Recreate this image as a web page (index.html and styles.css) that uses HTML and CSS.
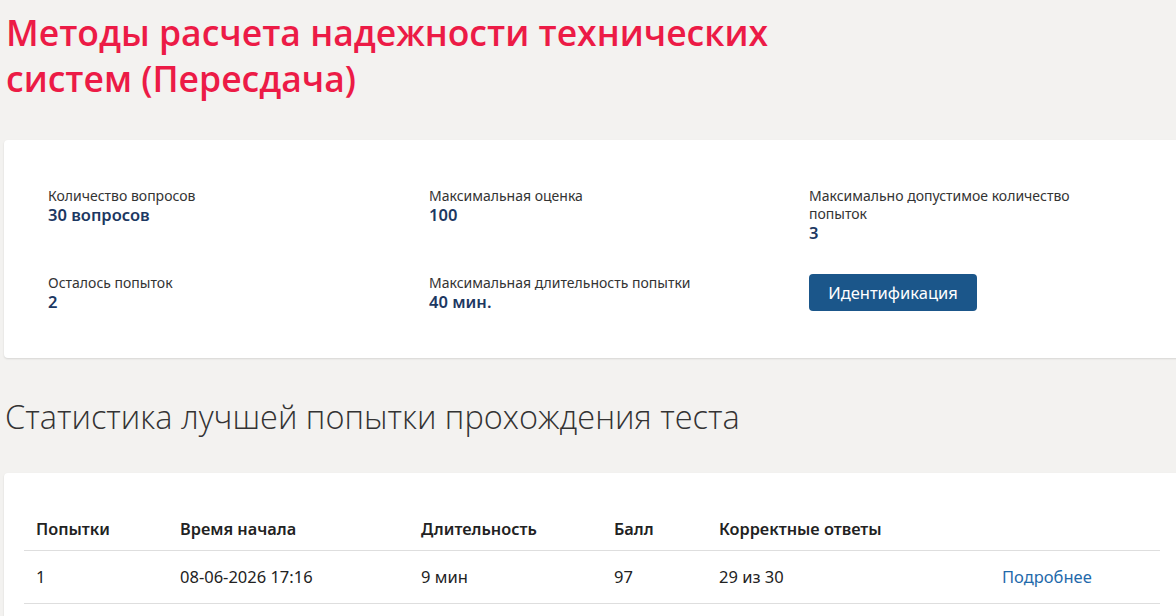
FILE: index.html
```html
<!DOCTYPE html>
<html lang="ru">
<head>
<meta charset="utf-8">
<title>Методы расчета надежности технических систем</title>
<link rel="stylesheet" href="styles.css">
</head>
<body>
<div class="page">
  <h1 class="title">Методы расчета надежности технических систем (Пересдача)</h1>

  <section class="card info-card">
    <div class="info-grid">
      <div class="info-item">
        <div class="info-label">Количество вопросов</div>
        <div class="info-value">30 вопросов</div>
      </div>
      <div class="info-item">
        <div class="info-label">Максимальная оценка</div>
        <div class="info-value">100</div>
      </div>
      <div class="info-item narrow">
        <div class="info-label">Максимально допустимое количество попыток</div>
        <div class="info-value">3</div>
      </div>
      <div class="info-item">
        <div class="info-label">Осталось попыток</div>
        <div class="info-value">2</div>
      </div>
      <div class="info-item">
        <div class="info-label">Максимальная длительность попытки</div>
        <div class="info-value">40 мин.</div>
      </div>
      <div class="info-item">
        <button class="btn" type="button">Идентификация</button>
      </div>
    </div>
  </section>

  <h2 class="subtitle">Статистика лучшей попытки прохождения теста</h2>

  <section class="card table-card">
    <table class="stats">
      <colgroup>
        <col class="c1"><col class="c2"><col class="c3"><col class="c4"><col class="c5"><col class="c6">
      </colgroup>
      <thead>
        <tr>
          <th>Попытки</th>
          <th>Время начала</th>
          <th>Длительность</th>
          <th>Балл</th>
          <th>Корректные ответы</th>
          <th></th>
        </tr>
      </thead>
      <tbody>
        <tr>
          <td>1</td>
          <td>08-06-2026 17:16</td>
          <td>9 мин</td>
          <td>97</td>
          <td>29 из 30</td>
          <td><a class="more" href="#">Подробнее</a></td>
        </tr>
      </tbody>
    </table>
  </section>
</div>
</body>
</html>
```

FILE: styles.css
```css
* { box-sizing: border-box; }
html, body {
  margin: 0;
  padding: 0;
  background: #f3f2f0;
  overflow: hidden;
}
body {
  font-family: "Noto Sans", "Open Sans", sans-serif;
  color: #222;
  width: 1176px;
  height: 616px;
}
.page {
  padding: 9px 0 0 4px;
  width: 1200px;
}
.title {
  margin: 0 0 0 2px;
  width: 770px;
  font-family: "Open Sans", "Noto Sans", sans-serif;
  font-weight: 600;
  font-size: 35.5px;
  line-height: 46px;
  color: #ec1b46;
}
.card {
  background: #fff;
  border-radius: 4px;
  box-shadow: 0 1px 2px rgba(0,0,0,0.12);
  width: 1176px;
}
.info-card {
  margin-top: 39px;
  height: 218px;
  padding: 47px 0 0 44px;
}
.info-grid {
  display: grid;
  grid-template-columns: 381px 380px 300px;
  row-gap: 31px;
}
.info-item { max-width: 290px; }
.info-label {
  font-size: 14px;
  line-height: 18px;
  color: #333;
}
.info-value {
  font-size: 16.5px;
  line-height: 20px;
  font-weight: 600;
  color: #1c3862;
}
.btn {
  display: block;
  height: 37px;
  padding: 0 10px;
  border: 0;
  border-radius: 4px;
  background: #1b568a;
  color: #fff;
  font-family: "Noto Sans", sans-serif;
  font-size: 16.5px;
  width: 168px;
}
.subtitle {
  margin: 37px 0 0 1px;
  font-family: "Open Sans", "Noto Sans", sans-serif;
  font-weight: 300;
  font-size: 32.5px;
  line-height: 44px;
  color: #333;
}
.table-card {
  margin-top: 34px;
  padding: 35px 20px 20px 20px;
  height: 200px;
}
.stats {
  width: 1136px;
  table-layout: fixed;
  border-collapse: collapse;
}
.c1 { width: 144px; }
.c2 { width: 241px; }
.c3 { width: 193px; }
.c4 { width: 105px; }
.c5 { width: 283px; }
.c6 { width: 170px; }
.stats th {
  text-align: left;
  font-weight: 600;
  font-size: 16.3px;
  line-height: 21px;
  padding: 11px 12px 10px;
  color: #222;
  border-bottom: 1px solid #dedede;
}
.stats td {
  font-size: 16.5px;
  line-height: 22px;
  padding: 15px 12px;
  color: #222;
  border-bottom: 1px solid #dedede;
}
.more {
  color: #1f6aab;
  text-decoration: none;
}
```
